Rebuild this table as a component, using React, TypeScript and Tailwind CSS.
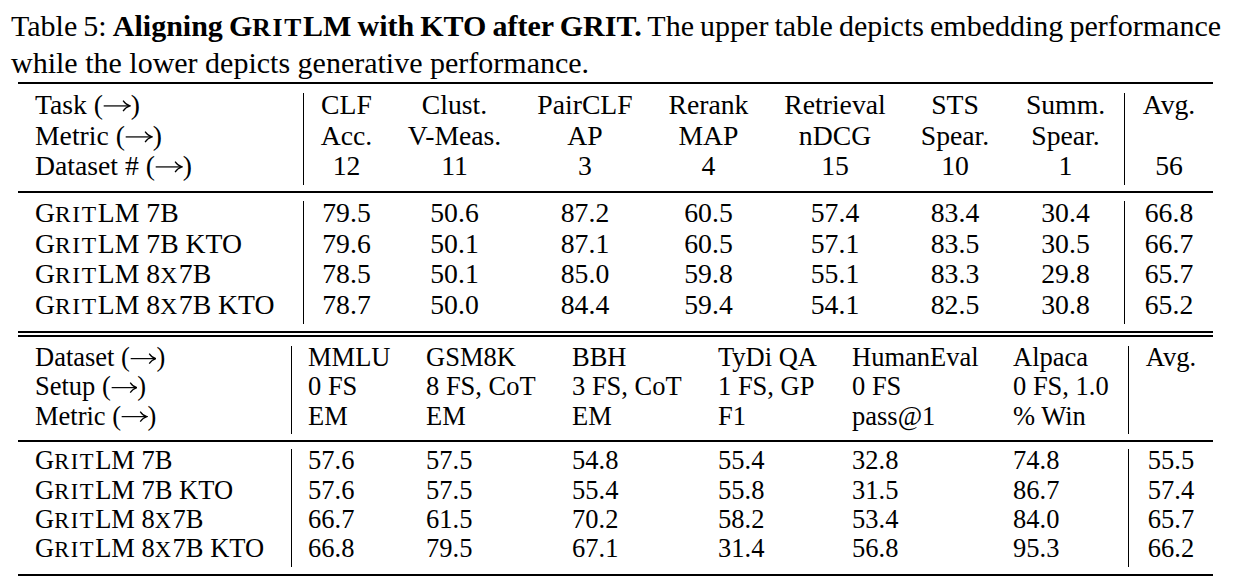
import React from "react";

const upperHead = [
  ["Task", "CLF", "Clust.", "PairCLF", "Rerank", "Retrieval", "STS", "Summ.", "Avg."],
  ["Metric", "Acc.", "V-Meas.", "AP", "MAP", "nDCG", "Spear.", "Spear.", ""],
  ["Dataset #", "12", "11", "3", "4", "15", "10", "1", "56"],
];

const upperData = [
  { big: false, kto: false, vals: ["79.5", "50.6", "87.2", "60.5", "57.4", "83.4", "30.4", "66.8"] },
  { big: false, kto: true, vals: ["79.6", "50.1", "87.1", "60.5", "57.1", "83.5", "30.5", "66.7"] },
  { big: true, kto: false, vals: ["78.5", "50.1", "85.0", "59.8", "55.1", "83.3", "29.8", "65.7"] },
  { big: true, kto: true, vals: ["78.7", "50.0", "84.4", "59.4", "54.1", "82.5", "30.8", "65.2"] },
];

const lowerHead = [
  ["Dataset", "MMLU", "GSM8K", "BBH", "TyDi QA", "HumanEval", "Alpaca", "Avg."],
  ["Setup", "0 FS", "8 FS, CoT", "3 FS, CoT", "1 FS, GP", "0 FS", "0 FS, 1.0", ""],
  ["Metric", "EM", "EM", "EM", "F1", "pass@1", "% Win", ""],
];

const lowerData = [
  { big: false, kto: false, vals: ["57.6", "57.5", "54.8", "55.4", "32.8", "74.8", "55.5"] },
  { big: false, kto: true, vals: ["57.6", "57.5", "55.4", "55.8", "31.5", "86.7", "57.4"] },
  { big: true, kto: false, vals: ["66.7", "61.5", "70.2", "58.2", "53.4", "84.0", "65.7"] },
  { big: true, kto: true, vals: ["66.8", "79.5", "67.1", "31.4", "56.8", "95.3", "66.2"] },
];

// fake small caps, a bit wider like the Times SC in the paper
const Sc = ({ children }: { children: React.ReactNode }) => (
  <span className="text-[0.85em] tracking-[0.07em]">{children}</span>
);

const Grit = () => (
  <>
    G<Sc>RIT</Sc>LM
  </>
);

const ModelName = ({ big, kto }: { big: boolean; kto: boolean }) => (
  <>
    <Grit />{" "}
    {big ? (
      <>
        8<Sc>X</Sc>7B
      </>
    ) : (
      "7B"
    )}
    {kto ? " KTO" : ""}
  </>
);

// math \rightarrow, drawn since the serif font has no good glyph for it
const Arrow = () => (
  <svg viewBox="0 0 20 10" className="inline-block w-[1em] h-[0.5em] align-[0.04em]" fill="none" stroke="black">
    <path d="M0.5 5 H19" strokeWidth="0.9" />
    <path d="M14.5 1.2 Q16.5 4.2 19.5 5 Q16.5 5.8 14.5 8.8" strokeWidth="0.9" />
  </svg>
);

const Label = ({ text }: { text: string }) => (
  <>
    {text} (<Arrow />)
  </>
);

const UpperRow = ({ first, cells }: { first: React.ReactNode; cells: string[] }) => (
  <div className="grid grid-cols-[285px_86px_131px_130px_117px_136px_104px_117px_89px]">
    <div className="h-[30.67px] pl-[17px] whitespace-nowrap">{first}</div>
    {cells.map((c, i) => (
      <div
        key={i}
        className={
          "h-[30.67px] text-center whitespace-nowrap" +
          (i === 0 || i === cells.length - 1 ? " border-l border-black" : "")
        }
      >
        {c}
      </div>
    ))}
  </div>
);

const LowerRow = ({ first, cells }: { first: React.ReactNode; cells: string[] }) => (
  <div className="grid grid-cols-[273px_119px_146px_146px_134px_161px_131px_85px]">
    <div className="h-[29.35px] pl-[17px] whitespace-nowrap">{first}</div>
    {cells.map((c, i) => {
      const last = i === cells.length - 1;
      return (
        <div
          key={i}
          className={
            "h-[29.35px] whitespace-nowrap" +
            (last ? " border-l border-black text-center" : " pl-[16px]") +
            (i === 0 ? " border-l border-black" : "")
          }
        >
          {c}
        </div>
      );
    })}
  </div>
);

export default function App() {
  return (
    <div className="w-[1239px] h-[582px] bg-white text-black [font-family:'Liberation_Serif','Times_New_Roman',serif] overflow-hidden">
      {/* caption */}
      <div className="pt-[8px] ml-[11px] w-[1210px] text-[30px] leading-[35px] text-justify [word-spacing:-2px]">
        Table 5:{" "}
        <b>
          Aligning <Grit /> with KTO after GRIT.
        </b>{" "}
        The upper table depicts embedding performance{" "}
        <span className="[word-spacing:normal]">while the lower depicts generative performance.</span>
      </div>

      <div className="ml-[18px] w-[1195px]">
        <div className="mt-[2px] h-[2px] bg-black" />
        <div className="h-[9px]" />

        {/* upper: embedding */}
        <div className="text-[27.7px] leading-[24.3px]">
          {upperHead.map((r, i) => (
            <UpperRow key={i} first={<Label text={r[0]} />} cells={r.slice(1)} />
          ))}
        </div>
        <div className="h-[6.5px]" />
        <div className="h-[1.5px] bg-black" />
        <div className="h-[8px]" />
        <div className="text-[27.7px] leading-[24.3px]">
          {upperData.map((r, i) => (
            <UpperRow key={i} first={<ModelName big={r.big} kto={r.kto} />} cells={r.vals} />
          ))}
        </div>
        <div className="h-[7.8px]" />

        {/* double rule */}
        <div className="h-[2px] bg-black" />
        <div className="h-[2px]" />
        <div className="h-[2px] bg-black" />
        <div className="h-[8.5px]" />

        {/* lower: generative */}
        <div className="text-[26.5px] leading-[23.1px]">
          {lowerHead.map((r, i) => (
            <LowerRow key={i} first={<Label text={r[0]} />} cells={r.slice(1)} />
          ))}
        </div>
        <div className="h-[6.5px]" />
        <div className="h-[1.5px] bg-black" />
        <div className="h-[7.5px]" />
        <div className="text-[26.5px] leading-[23.1px]">
          {lowerData.map((r, i) => (
            <LowerRow key={i} first={<ModelName big={r.big} kto={r.kto} />} cells={r.vals} />
          ))}
        </div>
        <div className="h-[7px]" />
        <div className="h-[2px] bg-black" />
      </div>
    </div>
  );
}
